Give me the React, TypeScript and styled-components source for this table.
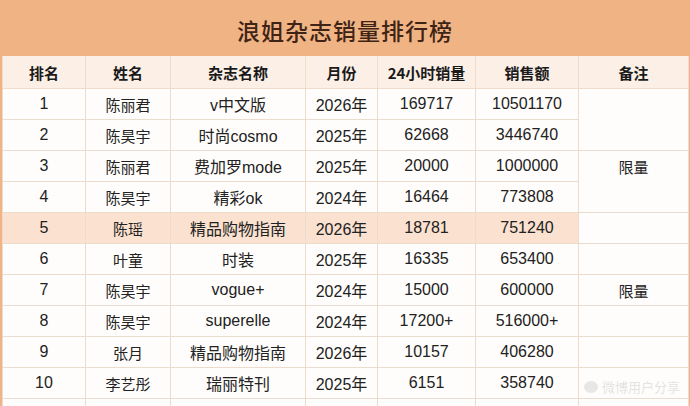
import styled, { createGlobalStyle } from 'styled-components';

const GlobalStyle = createGlobalStyle`
  html, body {
    margin: 0;
    padding: 0;
    background: #ffffff;
  }
  body {
    font-family: 'Liberation Sans', 'Noto Sans CJK SC', sans-serif;
  }
`;

type Row = {
  rank: number;
  name: string;
  magazine: string;
  year: string;
  sales24: string;
  amount: string;
  highlight?: boolean;
};

// 备注 column is laid out separately: some cells span two rows
type Note = { text: string; span: number; top?: boolean };

const rows: Row[] = [
  { rank: 1, name: '陈丽君', magazine: 'v中文版', year: '2026年', sales24: '169717', amount: '10501170' },
  { rank: 2, name: '陈昊宇', magazine: '时尚cosmo', year: '2025年', sales24: '62668', amount: '3446740' },
  { rank: 3, name: '陈丽君', magazine: '费加罗mode', year: '2025年', sales24: '20000', amount: '1000000' },
  { rank: 4, name: '陈昊宇', magazine: '精彩ok', year: '2024年', sales24: '16464', amount: '773808' },
  { rank: 5, name: '陈瑶', magazine: '精品购物指南', year: '2026年', sales24: '18781', amount: '751240', highlight: true },
  { rank: 6, name: '叶童', magazine: '时装', year: '2025年', sales24: '16335', amount: '653400' },
  { rank: 7, name: '陈昊宇', magazine: 'vogue+', year: '2024年', sales24: '15000', amount: '600000' },
  { rank: 8, name: '陈昊宇', magazine: 'superelle', year: '2024年', sales24: '17200+', amount: '516000+' },
  { rank: 9, name: '张月', magazine: '精品购物指南', year: '2026年', sales24: '10157', amount: '406280' },
  { rank: 10, name: '李艺彤', magazine: '瑞丽特刊', year: '2025年', sales24: '6151', amount: '358740' },
];

// keyed by the row index where the note cell starts
const notes: Record<number, Note> = {
  0: { text: '', span: 2 },
  2: { text: '限量', span: 2, top: true },
  4: { text: '', span: 1 },
  5: { text: '', span: 1 },
  6: { text: '限量', span: 1 },
  7: { text: '', span: 1 },
  8: { text: '', span: 1 },
  9: { text: '', span: 1 },
};

const columns = [
  { label: '排名', width: 83 },
  { label: '姓名', width: 85 },
  { label: '杂志名称', width: 135 },
  { label: '月份', width: 72 },
  { label: '24小时销量', width: 98 },
  { label: '销售额', width: 103 },
  { label: '备注', width: 110 },
];

const Page = styled.div`
  position: relative;
  width: 690px;
  height: 406px;
  overflow: hidden;
  background: #f0b384;
  padding: 0 2px;
  box-sizing: border-box;
`;

const TitleBar = styled.div`
  height: 56px;
  padding-top: 3px;
  box-sizing: border-box;
  display: flex;
  align-items: center;
  justify-content: center;
  font-family: 'Noto Sans CJK SC', serif;
  font-size: 23px;
  font-weight: 500;
  letter-spacing: 1px;
  color: #3f2416;
`;

const Table = styled.table`
  width: 686px;
  border-collapse: collapse;
  table-layout: fixed;
  background: #fffdfb;
`;

const HeadCell = styled.th`
  height: 32px;
  padding: 0;
  background: #fcefe6;
  border: 1px solid #f1dccb;
  border-top: none;
  font-family: 'Noto Sans CJK SC', sans-serif;
  font-size: 15px;
  font-weight: 700;
  color: #1a1a1a;
  text-align: center;
`;

const Cell = styled.td<{ $highlight?: boolean; $name?: boolean }>`
  height: 30px;
  padding: 0;
  background: ${(p) => (p.$highlight ? '#fbe1cf' : '#fffdfb')};
  border: 1px solid #ebdccd;
  font-family: ${(p) =>
    p.$name ? "'Noto Sans CJK SC', sans-serif" : "'Liberation Sans', 'Noto Sans CJK SC', sans-serif"};
  font-size: ${(p) => (p.$name ? '15px' : '16px')};
  color: #222;
  text-align: center;
  white-space: nowrap;
`;

const NoteCell = styled.td<{ $top?: boolean }>`
  padding: ${(p) => (p.$top ? '5px 0 0' : '0')};
  vertical-align: ${(p) => (p.$top ? 'top' : 'middle')};
  background: #fffdfb;
  border: 1px solid #ebdccd;
  font-family: 'Noto Sans CJK SC', sans-serif;
  font-size: 15px;
  color: #222;
  text-align: center;
`;

const Watermark = styled.div`
  position: absolute;
  right: 10px;
  bottom: 10px;
  display: flex;
  align-items: center;
  gap: 4px;
  font-family: 'Noto Sans CJK SC', sans-serif;
  font-size: 13px;
  color: rgba(200, 200, 200, 0.5);
`;

const WatermarkDot = styled.span`
  width: 14px;
  height: 12px;
  border-radius: 50%;
  background: rgba(205, 205, 205, 0.45);
`;

export default function App() {
  return (
    <>
      <GlobalStyle />
      <Page>
        <TitleBar>浪姐杂志销量排行榜</TitleBar>
        <Table>
          <colgroup>
            {columns.map((c) => (
              <col key={c.label} style={{ width: c.width }} />
            ))}
          </colgroup>
          <thead>
            <tr>
              {columns.map((c) => (
                <HeadCell key={c.label}>{c.label}</HeadCell>
              ))}
            </tr>
          </thead>
          <tbody>
            {rows.map((r, i) => {
              const note = notes[i];
              return (
                <tr key={r.rank}>
                  <Cell $highlight={r.highlight}>{r.rank}</Cell>
                  <Cell $highlight={r.highlight} $name>{r.name}</Cell>
                  <Cell $highlight={r.highlight}>{r.magazine}</Cell>
                  <Cell $highlight={r.highlight}>{r.year}</Cell>
                  <Cell $highlight={r.highlight}>{r.sales24}</Cell>
                  <Cell $highlight={r.highlight}>{r.amount}</Cell>
                  {note && (
                    <NoteCell rowSpan={note.span} $top={note.top}>
                      {note.text}
                    </NoteCell>
                  )}
                </tr>
              );
            })}
            <tr>
              {columns.map((c) => (
                <Cell key={c.label} />
              ))}
            </tr>
          </tbody>
        </Table>
        <Watermark>
          <WatermarkDot />
          微博用户分享
        </Watermark>
      </Page>
    </>
  );
}
